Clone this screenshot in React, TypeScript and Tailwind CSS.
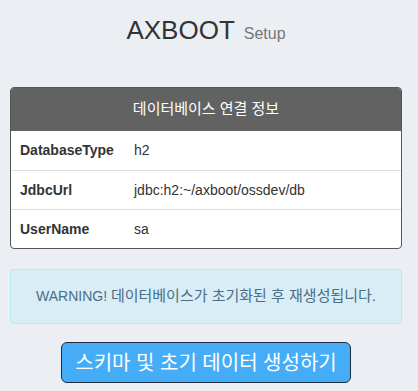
import React from "react";

export default function App() {
  const rows = [
    ["DatabaseType", "h2"],
    ["JdbcUrl", "jdbc:h2:~/axboot/ossdev/db"],
    ["UserName", "sa"],
  ];
  return (
    <div
      className="min-h-[391px] w-full bg-[#ebeef3] pt-[5px]"
      style={{ fontFamily: '"Liberation Sans", Arial, "Noto Sans CJK KR", sans-serif' }}
    >
      <div className="ml-[10px] w-[392px]">
        <div className="flex h-[40px] items-end justify-center gap-[9px] text-[#333]">
          <span className="text-[26px] leading-[30px]">AXBOOT</span>
          <span className="text-[16px] leading-[22px] text-[#777]">Setup</span>
        </div>
        <div className="mt-[42px] overflow-hidden rounded-[4px] border border-[#555] bg-white">
          <div className="flex h-[43px] items-center justify-center bg-[#626262] text-[15px] text-white">
            데이터베이스 연결 정보
          </div>
          {rows.map(([k, v], i) => (
            <div
              key={k}
              className={
                "flex h-[39px] items-center text-[14px] text-[#333] " +
                (i > 0 ? "border-t border-[#ddd]" : "")
              }
            >
              <div className="w-[123px] pl-[9px] font-bold">{k}</div>
              <div>{v}</div>
            </div>
          ))}
        </div>
        <div className="mt-[20px] flex h-[55px] items-center justify-center rounded-[4px] border border-[#bce8f1] bg-[#d9edf7] text-[14px] text-[#4a6e84]">
          <span>
            WARNING! <span className="text-[15px]">데이터베이스가 초기화된 후 재생성됩니다.</span>
          </span>
        </div>
        <div className="mt-[18px] flex justify-center">
          <button className="h-[41px] w-[290px] rounded-[6px] border border-[#1e2d3d] bg-[#45adf8] text-[20px] text-white">
            스키마 및 초기 데이터 생성하기
          </button>
        </div>
      </div>
    </div>
  );
}
